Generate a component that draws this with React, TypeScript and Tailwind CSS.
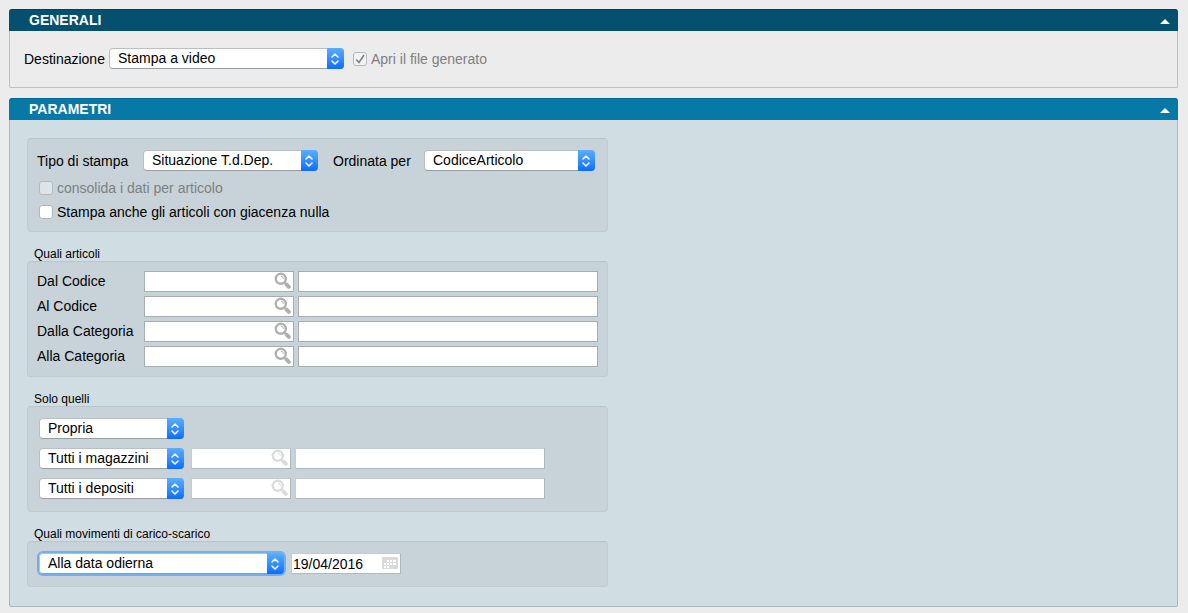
import { FC, ReactNode, useState } from 'react';
import clsx from 'clsx';

interface PanelProps {
  title: string;
  headerClass: string;
  bodyClass: string;
  children: ReactNode;
}

const Panel: FC<PanelProps> = ({ title, headerClass, bodyClass, children }) => {
  const [open, setOpen] = useState(true);

  return (
    <section>
      <h2>
        <button
          type="button"
          aria-expanded={open}
          onClick={() => setOpen(!open)}
          className={clsx(
            'flex h-[22px] w-full items-center justify-between rounded-t-[3px] border-t pb-[2px] pl-5 pr-2 text-sm font-bold text-white',
            headerClass
          )}
        >
          <span>{title}</span>
          <svg className={clsx('mt-1 h-[5px] w-[10px]', !open && 'rotate-180')} viewBox="0 0 10 5" fill="currentColor">
            <path d="M5 0 10 5H0z" />
          </svg>
        </button>
      </h2>
      {open && <div className={clsx('rounded-b-[2px] border-x border-b', bodyClass)}>{children}</div>}
    </section>
  );
};

interface GroupProps {
  legend?: string;
  className?: string;
  children: ReactNode;
}

const Group: FC<GroupProps> = ({ legend, className, children }) => (
  <fieldset className="w-full max-w-[581px]">
    {legend && <legend className="pl-[7px] text-xs leading-[14px]">{legend}</legend>}
    <div className={clsx('rounded-[4px] border border-[#c0ccd2] border-t-[#b8c5cb] bg-[#c7d3d9]', className)}>
      {children}
    </div>
  </fieldset>
);

interface SelectProps {
  id: string;
  label?: string;
  options: string[];
  className: string;
  focused?: boolean;
}

const Select: FC<SelectProps> = ({ id, label, options, className, focused }) => (
  <div className={clsx('relative h-[21px] rounded-[4px]', focused && 'ring-2 ring-[#6fb0f0]', className)}>
    <select
      id={id}
      aria-label={label}
      className="block h-full w-full appearance-none rounded-[4px] border border-[#b9bfc2] border-b-[#979da0] bg-white pb-[2px] pl-2 pr-5 text-sm leading-4 text-black outline-none"
    >
      {options.map((option) => (
        <option key={option}>{option}</option>
      ))}
    </select>
    <span className="pointer-events-none absolute inset-y-0 right-0 flex w-[17px] items-center justify-center rounded-r-[4px] bg-linear-to-b from-[#5aaefc] to-[#0a6cff] pr-px">
      <svg className="h-3 w-2" viewBox="0 0 8 12" fill="none" stroke="white" strokeWidth="1.5">
        <path d="M1 4 4 1l3 3M1 8l3 3 3-3" strokeLinecap="round" strokeLinejoin="round" />
      </svg>
    </span>
  </div>
);

interface CheckboxProps {
  label: string;
  checked?: boolean;
  disabled?: boolean;
}

const Checkbox: FC<CheckboxProps> = ({ label, checked = false, disabled }) => (
  <label className={clsx('flex h-4 items-center gap-1', disabled ? 'text-[#7d8082]' : 'text-black')}>
    <span className="relative size-[14px] shrink-0">
      <input
        type="checkbox"
        defaultChecked={checked}
        disabled={disabled}
        className={clsx(
          'peer block size-[14px] appearance-none rounded-[3px] border',
          disabled ? 'border-[#b5babd] bg-white/40' : 'border-[#b0b7ba] bg-white'
        )}
      />
      <svg
        className="pointer-events-none absolute inset-0 hidden size-[14px] peer-checked:block"
        viewBox="0 0 14 14"
        fill="none"
        stroke="currentColor"
        strokeWidth="1.6"
      >
        <path d="M3.2 7.5 6 10.5l5-7.5" />
      </svg>
    </span>
    <span>{label}</span>
  </label>
);

interface LookupFieldProps {
  id: string;
  label: string;
  disabled?: boolean;
  className: string;
  descriptionClass: string;
}

const borderFor = (disabled?: boolean) =>
  disabled ? 'border-[#c3cdd1] border-r-[#b0babe] border-b-[#b0babe]' : 'border-[#a6aeb2]';

// Code field with its search button, followed by the description
const LookupField: FC<LookupFieldProps> = ({ id, label, disabled, className, descriptionClass }) => (
  <>
    <div className={clsx('flex h-[21px] items-center border bg-white', borderFor(disabled), className)}>
      <input id={id} aria-label={label} disabled={disabled} className="h-full w-0 min-w-0 flex-1 px-1 outline-none" />
      <button
        type="button"
        aria-label={`Cerca ${label}`}
        disabled={disabled}
        className={clsx('mr-[2px] mb-[2px] shrink-0', disabled ? 'text-[#dcdcdc]' : 'text-[#b0b0b0]')}
      >
        <svg className="size-[17px]" viewBox="0 0 17 17" fill="none" stroke="currentColor">
          <circle cx="6.8" cy="6.8" r="5" strokeWidth="2.4" />
          <path d="M6.8 4.2a2.6 2.6 0 0 1 2.6 2.6" strokeWidth="1" />
          <path d="m10.4 10.4 2 2" strokeWidth="2" />
          <path d="m12.6 12.6 2.2 2.2" strokeWidth="4" strokeLinecap="round" />
        </svg>
      </button>
    </div>
    <input
      aria-label={`Descrizione ${label}`}
      disabled={disabled}
      className={clsx('h-[21px] min-w-0 border bg-white px-1 outline-none', borderFor(disabled), descriptionClass)}
    />
  </>
);

const CalendarIcon = () => (
  <svg className="h-3 w-4" viewBox="0 0 16 12">
    <rect width="16" height="12" rx="1" fill="#dadada" />
    <path
      d="M5 3h2v2H5zM8 3h2v2H8zM11 3h3v2h-3zM2 6h2v2H2zM5 6h2v2H5zM8 6h2v2H8zM11 6h3v2h-3zM2 9h2v2H2zM5 9h2v2H5z"
      fill="white"
    />
  </svg>
);

const articleRows = [
  { id: 'dal-codice', label: 'Dal Codice' },
  { id: 'al-codice', label: 'Al Codice' },
  { id: 'dalla-categoria', label: 'Dalla Categoria' },
  { id: 'alla-categoria', label: 'Alla Categoria' },
];

const storeRows = [
  { id: 'magazzino', label: 'Magazzino', option: 'Tutti i magazzini' },
  { id: 'deposito', label: 'Deposito', option: 'Tutti i depositi' },
];

export default function App() {
  return (
    <main className="flex min-h-screen flex-col gap-[10px] bg-[#ececec] pb-[6px] pl-[9px] pr-[10px] pt-[9px] font-['Liberation_Sans',Arial,sans-serif] text-sm leading-4 text-black">
      <Panel
        title="GENERALI"
        headerClass="border-[#03405a] bg-[#04506e]"
        bodyClass="border-[#bfbfbf] flex flex-wrap items-center px-[14px] pt-[17px] pb-[18px]"
      >
        <label htmlFor="destinazione" className="w-[85px]">
          Destinazione
        </label>
        <Select id="destinazione" options={['Stampa a video']} className="w-[235px]" />
        <div className="ml-[9px]">
          <Checkbox label="Apri il file generato" checked disabled />
        </div>
      </Panel>

      <Panel
        title="PARAMETRI"
        headerClass="border-[#056a95] bg-[#0679a7]"
        bodyClass="border-[#a9b8be] bg-[#d0dde2] flex flex-col gap-[15px] px-[17px] pt-[18px] pb-[19px]"
      >
        <Group className="px-[9px] pt-[11px] pb-[11px]">
          <div className="flex items-center">
            <label htmlFor="tipo-stampa" className="w-[106px]">
              Tipo di stampa
            </label>
            <Select id="tipo-stampa" options={['Situazione T.d.Dep.']} className="w-[175px]" />
            <label htmlFor="ordinata-per" className="ml-[15px] w-[91px]">
              Ordinata per
            </label>
            <Select id="ordinata-per" options={['CodiceArticolo']} className="w-[171px]" />
          </div>
          <div className="mt-[9px] flex flex-col gap-2 pl-[2px]">
            <Checkbox label="consolida i dati per articolo" disabled />
            <Checkbox label="Stampa anche gli articoli con giacenza nulla" />
          </div>
        </Group>

        <Group legend="Quali articoli" className="flex flex-col gap-1 px-[9px] pt-[9px] pb-[9px]">
          {articleRows.map((row) => (
            <div key={row.id} className="flex items-center">
              <label htmlFor={row.id} className="w-[107px] pb-[2px]">
                {row.label}
              </label>
              <LookupField id={row.id} label={row.label} className="w-[150px]" descriptionClass="ml-1 w-[300px]" />
            </div>
          ))}
        </Group>

        <Group legend="Solo quelli" className="flex flex-col gap-[9px] px-[11px] pt-[11px] pb-3">
          <Select id="proprieta" label="Proprietà" options={['Propria']} className="w-[145px]" />
          {storeRows.map((row) => (
            <div key={row.id} className="flex items-center">
              <Select id={row.id} label={row.label} options={[row.option]} className="w-[145px]" />
              <LookupField
                id={`${row.id}-codice`}
                label={row.label}
                disabled
                className="ml-[7px] w-[100px]"
                descriptionClass="ml-1 w-[250px]"
              />
            </div>
          ))}
        </Group>

        <Group legend="Quali movimenti di carico-scarico" className="flex items-center px-[11px] pt-[11px] pb-3">
          <Select id="movimenti" label="Movimenti" options={['Alla data odierna']} className="w-[245px]" focused />
          <div className={clsx('ml-[7px] flex h-[21px] w-[110px] items-center border bg-white pr-[2px]', borderFor(true))}>
            <input aria-label="Data" defaultValue="19/04/2016" className="w-0 min-w-0 flex-1 pl-px outline-none" />
            <button type="button" aria-label="Calendario" className="mb-[2px]">
              <CalendarIcon />
            </button>
          </div>
        </Group>
      </Panel>
    </main>
  );
}
